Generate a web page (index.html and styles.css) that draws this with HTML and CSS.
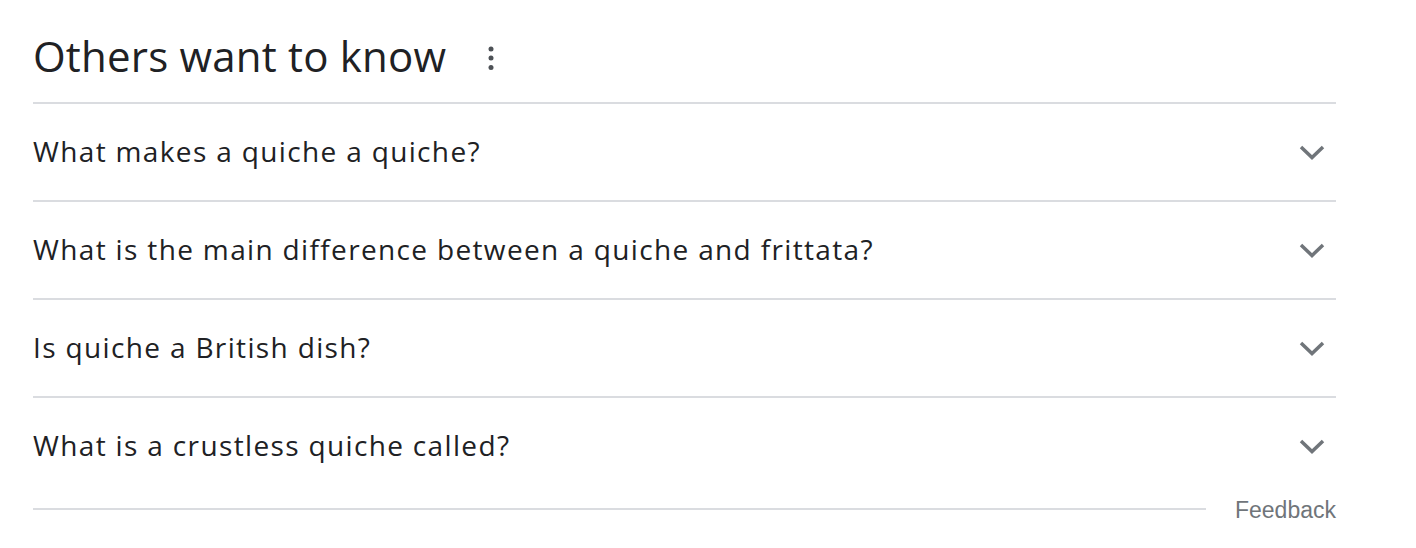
FILE: index.html
```html
<!DOCTYPE html>
<html>
<head>
<meta charset="utf-8">
<link rel="stylesheet" href="styles.css">
</head>
<body>
<div class="panel">
  <div class="header">
    <h2 class="title">Others want to know</h2>
    <span class="more" aria-label="More options">
      <svg width="8" height="26" viewBox="0 0 8 26"><circle cx="4" cy="4" r="2.5"/><circle cx="4" cy="13" r="2.5"/><circle cx="4" cy="22.5" r="2.5"/></svg>
    </span>
  </div>
  <div class="row"><span class="q">What makes a quiche a quiche?</span><svg class="chev" width="26" height="16" viewBox="0 0 26 16"><path d="M2 3 L13 13.5 L24 3"/></svg></div>
  <div class="row"><span class="q">What is the main difference between a quiche and frittata?</span><svg class="chev" width="26" height="16" viewBox="0 0 26 16"><path d="M2 3 L13 13.5 L24 3"/></svg></div>
  <div class="row"><span class="q">Is quiche a British dish?</span><svg class="chev" width="26" height="16" viewBox="0 0 26 16"><path d="M2 3 L13 13.5 L24 3"/></svg></div>
  <div class="row"><span class="q">What is a crustless quiche called?</span><svg class="chev" width="26" height="16" viewBox="0 0 26 16"><path d="M2 3 L13 13.5 L24 3"/></svg></div>
  <div class="footer">
    <div class="rule"></div>
    <span class="feedback">Feedback</span>
  </div>
</div>
</body>
</html>
```

FILE: styles.css
```css
html, body {
  margin: 0;
  padding: 0;
  background: #ffffff;
}
body {
  font-family: "Open Sans", Roboto, Arial, sans-serif;
  color: #202124;
}
.panel {
  width: 1303px;
  margin-left: 33px;
}
.header {
  height: 102px;
  display: flex;
  align-items: center;
  padding-top: 10px;
  box-sizing: border-box;
}
.title {
  margin: 0;
  font-size: 42px;
  font-weight: 400;
  line-height: 52px;
  letter-spacing: 0.2px;
}
.more {
  margin-left: 41px;
  display: flex;
  fill: #4d5156;
  padding-top: 4px;
}
.row {
  height: 96px;
  border-top: 2px solid #dadce0;
  display: flex;
  align-items: center;
  justify-content: space-between;
}
.q {
  font-size: 28px;
  line-height: 36px;
  letter-spacing: 1.35px;
  padding-bottom: 2px;
}
.chev {
  margin-right: 11px;
  fill: none;
  stroke: #70757a;
  stroke-width: 3.5;
}
.footer {
  height: 30px;
  display: flex;
  align-items: center;
}
.rule {
  flex: 1;
  height: 2px;
  background: #dadce0;
  margin-right: 29px;
}
.feedback {
  font-family: "Liberation Sans", Arial, sans-serif;
  font-size: 23px;
  color: #70757a;
  padding-top: 2px;
}
```
